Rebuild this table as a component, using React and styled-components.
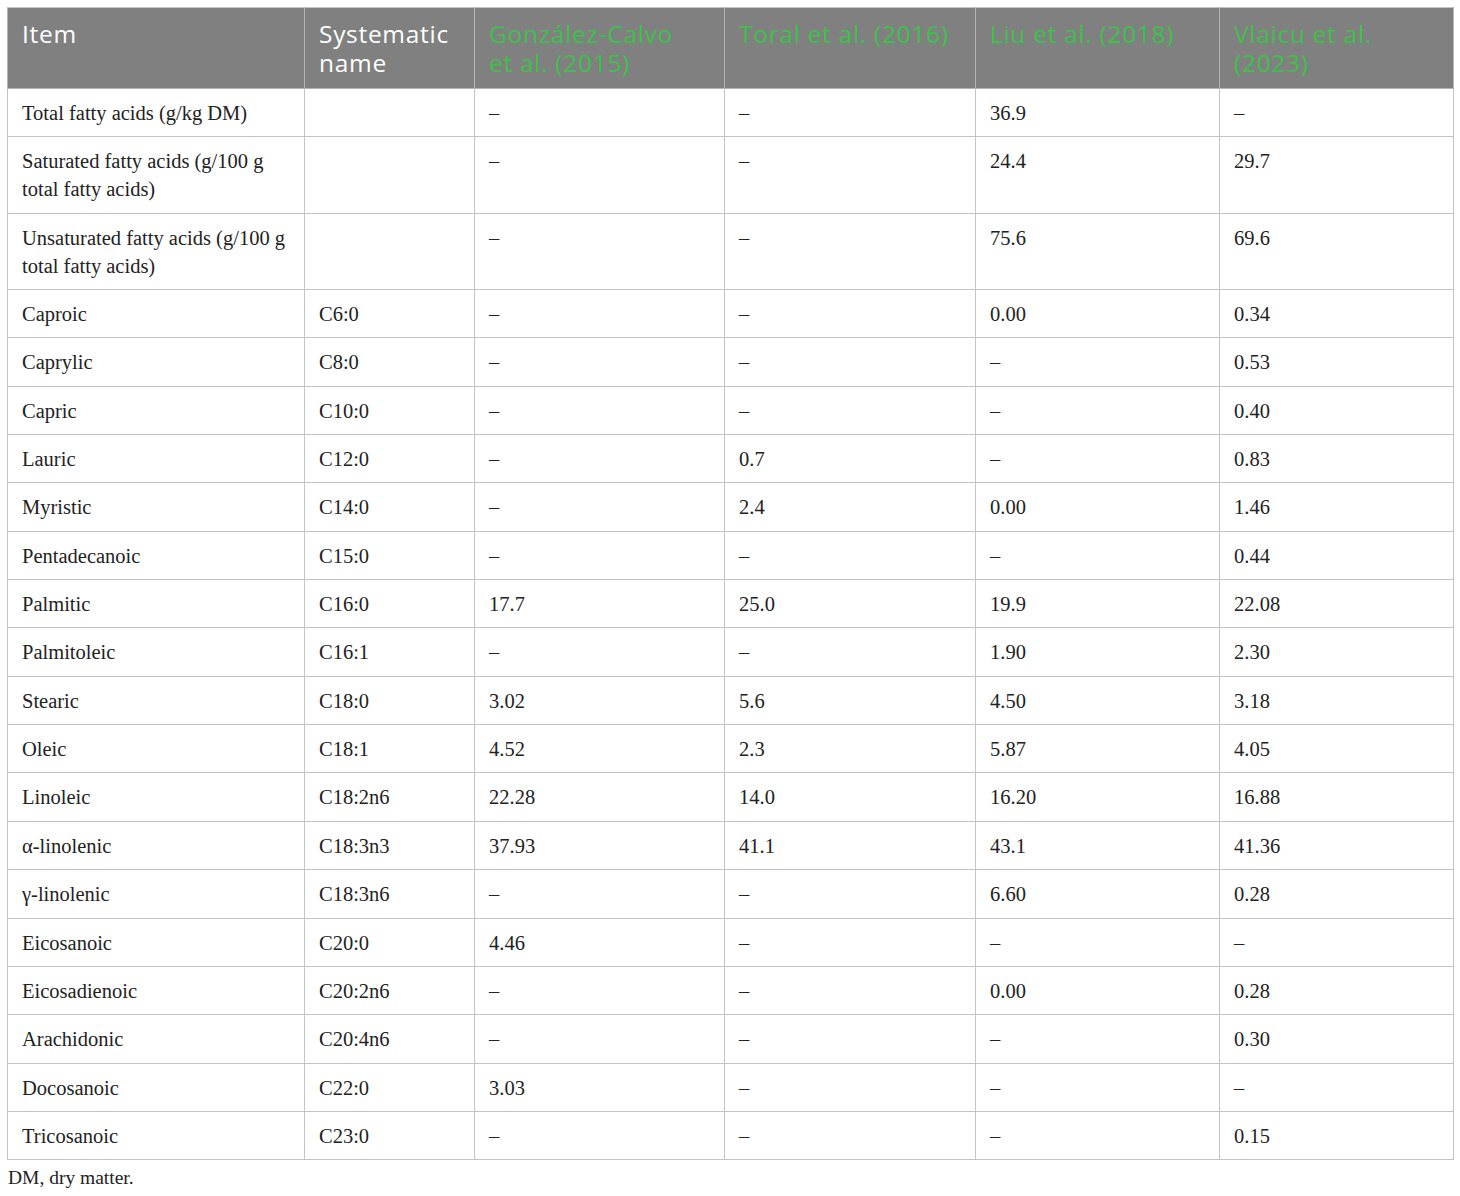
import React from "react";
import styled, { createGlobalStyle } from "styled-components";

const GlobalStyle = createGlobalStyle`
  html, body {
    margin: 0;
    padding: 0;
    background: #ffffff;
  }
`;

const Page = styled.div`
  padding: 7px 8px 0 7px;
  width: 1446px;
`;

const Table = styled.table`
  width: 1446px;
  border-collapse: collapse;
  table-layout: fixed;
  border: 1px solid #c4c4c4;
`;

const HeadCell = styled.th`
  background: #808080;
  color: ${(p) => (p.$cite ? "#3ec14b" : "#ffffff")};
  font-family: "Open Sans", "Noto Sans", sans-serif;
  font-weight: 400;
  font-size: 24.5px;
  letter-spacing: 0.7px;
  line-height: 29px;
  text-align: left;
  vertical-align: top;
  padding: 11px 24px 11px 14px;
  border: 1px solid #b5b5b5;
  border-top: 1px solid #c4c4c4;
`;

const Cell = styled.td`
  font-family: "Liberation Serif", "Times New Roman", serif;
  font-size: 20.5px;
  line-height: 28px;
  color: #222222;
  text-align: left;
  vertical-align: top;
  padding: 10px 14px 9.35px 14px;
  border: 1px solid #c4c4c4;
`;

const Note = styled.p`
  margin: 6px 0 0 1px;
  font-family: "Liberation Serif", "Times New Roman", serif;
  font-size: 19.5px;
  line-height: 24px;
  color: #222222;
`;

const widths = [297, 170, 250, 251, 244, 234];

const headers = [
  { text: "Item" },
  { text: "Systematic name" },
  { text: "González-Calvo et al. (2015)", cite: true },
  { text: "Toral et al. (2016)", cite: true },
  { text: "Liu et al. (2018)", cite: true },
  { text: "Vlaicu et al. (2023)", cite: true },
];

const D = "–";

const rows = [
  ["Total fatty acids (g/kg DM)", "", D, D, "36.9", D],
  ["Saturated fatty acids (g/100 g total fatty acids)", "", D, D, "24.4", "29.7"],
  ["Unsaturated fatty acids (g/100 g total fatty acids)", "", D, D, "75.6", "69.6"],
  ["Caproic", "C6:0", D, D, "0.00", "0.34"],
  ["Caprylic", "C8:0", D, D, D, "0.53"],
  ["Capric", "C10:0", D, D, D, "0.40"],
  ["Lauric", "C12:0", D, "0.7", D, "0.83"],
  ["Myristic", "C14:0", D, "2.4", "0.00", "1.46"],
  ["Pentadecanoic", "C15:0", D, D, D, "0.44"],
  ["Palmitic", "C16:0", "17.7", "25.0", "19.9", "22.08"],
  ["Palmitoleic", "C16:1", D, D, "1.90", "2.30"],
  ["Stearic", "C18:0", "3.02", "5.6", "4.50", "3.18"],
  ["Oleic", "C18:1", "4.52", "2.3", "5.87", "4.05"],
  ["Linoleic", "C18:2n6", "22.28", "14.0", "16.20", "16.88"],
  ["α-linolenic", "C18:3n3", "37.93", "41.1", "43.1", "41.36"],
  ["γ-linolenic", "C18:3n6", D, D, "6.60", "0.28"],
  ["Eicosanoic", "C20:0", "4.46", D, D, D],
  ["Eicosadienoic", "C20:2n6", D, D, "0.00", "0.28"],
  ["Arachidonic", "C20:4n6", D, D, D, "0.30"],
  ["Docosanoic", "C22:0", "3.03", D, D, D],
  ["Tricosanoic", "C23:0", D, D, D, "0.15"],
];

const App = () => {
  return (
    <Page>
      <GlobalStyle />
      <Table>
        <colgroup>
          {widths.map((w, i) => (
            <col key={i} style={{ width: w }} />
          ))}
        </colgroup>
        <thead>
          <tr>
            {headers.map((h) => (
              <HeadCell key={h.text} $cite={h.cite}>
                {h.text}
              </HeadCell>
            ))}
          </tr>
        </thead>
        <tbody>
          {rows.map((r) => (
            <tr key={r[0]}>
              {r.map((c, i) => (
                <Cell key={i}>{c}</Cell>
              ))}
            </tr>
          ))}
        </tbody>
      </Table>
      <Note>DM, dry matter.</Note>
    </Page>
  );
};

export default App;
